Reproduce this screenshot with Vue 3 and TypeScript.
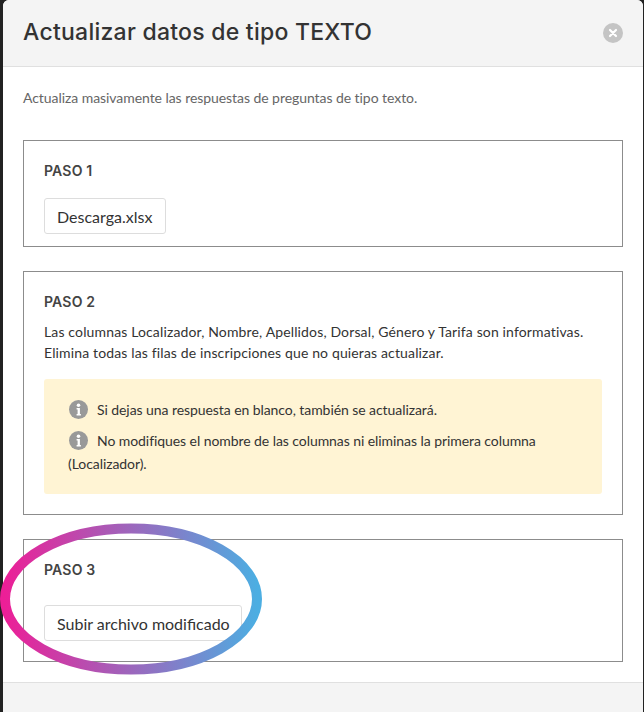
<script setup lang="ts">
const notes = [
  'Si dejas una respuesta en blanco, también se actualizará.',
  'No modifiques el nombre de las columnas ni eliminas la primera columna (Localizador).'
]
</script>

<template>
  <div class="backdrop">
    <div class="modal">
      <header class="modal_header">
        <h2>Actualizar datos de tipo TEXTO</h2>
        <span class="close">
          <svg width="10" height="10" viewBox="0 0 10 10">
            <path d="M2 2 8 8M8 2 2 8" stroke="#fff" stroke-width="2.2" stroke-linecap="round" />
          </svg>
        </span>
      </header>

      <div class="modal_body">
        <p class="intro">Actualiza masivamente las respuestas de preguntas de tipo texto.</p>

        <section class="step step_one">
          <h3>PASO 1</h3>
          <button class="btn">Descarga.xlsx</button>
        </section>

        <section class="step step_two">
          <h3>PASO 2</h3>
          <p class="info">
            Las columnas Localizador, Nombre, Apellidos, Dorsal, Género y Tarifa son informativas.<br />
            Elimina todas las filas de inscripciones que no quieras actualizar.
          </p>
          <div class="alert">
            <p v-for="note in notes" :key="note">
              <svg class="i_icon" width="19" height="19" viewBox="0 0 19 19">
                <circle cx="9.500" cy="9.500" r="9.500" fill="#999" />
                <circle cx="9.500" cy="5.200" r="1.800" fill="#fff" />
                <path d="M7.600 8h3.300v6h1v1.400H7.600V14h1v-4.600h-1z" fill="#fff" />
              </svg>{{ note }}
            </p>
          </div>
        </section>

        <section class="step step_three">
          <h3>PASO 3</h3>
          <button class="btn">Subir archivo modificado</button>
          <svg class="ring" width="264" height="154" viewBox="0 0 264 154">
            <defs>
              <linearGradient id="ring_grad" x1="0" y1="0" x2="1" y2="0">
                <stop offset="0" stop-color="#ec1f97" />
                <stop offset="1" stop-color="#4caee2" />
              </linearGradient>
            </defs>
            <ellipse cx="131" cy="76" rx="126" ry="70.500" fill="none" stroke="url(#ring_grad)" stroke-width="10" />
          </svg>
        </section>
      </div>

      <footer class="modal_footer"></footer>
    </div>
  </div>
</template>

<style>
html, body {
  margin: 0;
  background: #222;
}
</style>

<style scoped>
.backdrop {
  height: 712px;
  padding: 0 1px 0 3px;
  box-sizing: border-box;
  background: #222;
  overflow: hidden;
}

.modal {
  height: 712px;
  background: #fff;
  border-radius: 6px 6px 0 0;
  display: flex;
  flex-direction: column;
  font-family: Lato, sans-serif;
  color: #333;
}

.modal_header {
  flex: none;
  height: 66px;
  border-bottom: 1px solid #e0e0e0;
  border-radius: 6px 6px 0 0;
  background: #f4f4f4;
  display: flex;
  align-items: center;
  justify-content: space-between;
  padding: 0 20px;
}

.modal_header h2 {
  margin: 0 0 2px;
  font-family: Inter, sans-serif;
  font-size: 23px;
  font-weight: 500;
  letter-spacing: 0.25px;
  color: #333;
}

.close {
  width: 20px;
  height: 20px;
  border-radius: 50%;
  background: #c4c4c4;
  display: flex;
  align-items: center;
  justify-content: center;
}

.modal_body {
  flex: none;
  height: 615px;
  box-sizing: border-box;
  padding: 21px 20px 0;
}

.intro {
  margin: 0 0 32px;
  font-size: 14px;
  line-height: 20px;
  letter-spacing: -0.06px;
  color: #666;
}

.step {
  position: relative;
  border: 1px solid #8c8c8c;
  padding: 21px 20px 0;
  margin-bottom: 24px;
  box-sizing: border-box;
}

.step_one {
  height: 107px;
}

.step_two {
  height: 244px;
}

.step_three {
  height: 123px;
}

.step h3 {
  margin: 0;
  font-family: Inter, sans-serif;
  font-size: 14px;
  line-height: 18px;
  font-weight: 600;
  letter-spacing: 0.2px;
  color: #444;
}

.btn {
  display: block;
  height: 36px;
  padding: 0 12px;
  margin-top: 18px;
  background: #fff;
  border: 1px solid #ddd;
  border-radius: 3px;
  font-family: Lato, sans-serif;
  font-size: 16px;
  color: #333;
}

.step_one .btn {
  padding-right: 13px;
}

.step_three .btn {
  margin-top: 26px;
  padding-right: 11px;
}

.info {
  margin: 10px 0 16px;
  font-size: 14px;
  line-height: 21px;
  letter-spacing: 0.14px;
  color: #333;
}

.alert {
  background: #fff4d4;
  border-radius: 3px;
  padding: 19px 24px 18px;
  width: 558px;
  height: 115px;
  box-sizing: border-box;
}

.alert p {
  margin: 0 0 8px;
  font-size: 14px;
  line-height: 23px;
  letter-spacing: -0.07px;
}

.i_icon {
  vertical-align: -4px;
  margin-right: 9px;
  margin-left: 1px;
}

.ring {
  position: absolute;
  left: -24px;
  top: -17px;
}

.modal_footer {
  flex: 1;
  border-top: 1px solid #e0e0e0;
  background: #f4f4f4;
}
</style>
